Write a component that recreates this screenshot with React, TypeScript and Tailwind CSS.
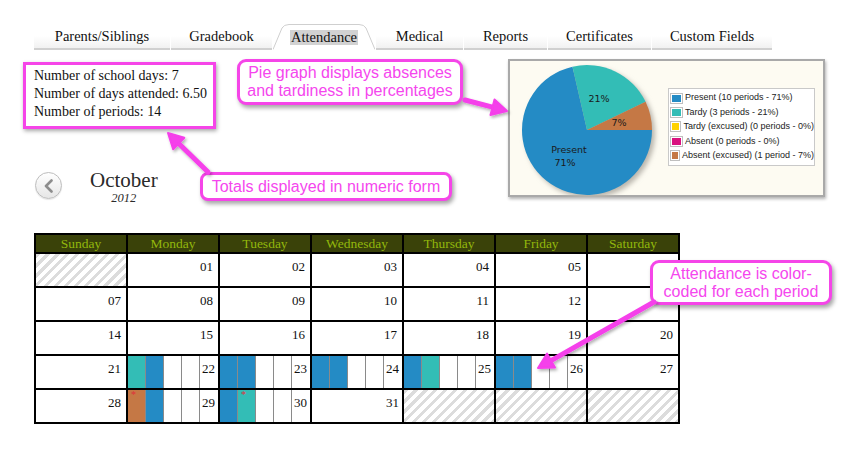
import React from "react";

const PINK = "#f53fea";

type Seg = "t" | "b" | "o" | "w";
type Cell =
  | { kind: "hatch" }
  | { kind: "num"; n: string }
  | { kind: "per"; n: string; p: Seg[]; star?: number }
  | { kind: "off"; n: string };

const rows: Cell[][] = [
  [{ kind: "hatch" }, { kind: "num", n: "01" }, { kind: "num", n: "02" }, { kind: "num", n: "03" }, { kind: "num", n: "04" }, { kind: "num", n: "05" }, { kind: "num", n: "06" }],
  [{ kind: "num", n: "07" }, { kind: "num", n: "08" }, { kind: "num", n: "09" }, { kind: "num", n: "10" }, { kind: "num", n: "11" }, { kind: "num", n: "12" }, { kind: "num", n: "13" }],
  [{ kind: "num", n: "14" }, { kind: "num", n: "15" }, { kind: "num", n: "16" }, { kind: "num", n: "17" }, { kind: "num", n: "18" }, { kind: "num", n: "19" }, { kind: "num", n: "20" }],
  [
    { kind: "num", n: "21" },
    { kind: "per", n: "22", p: ["t", "b", "w", "w"] },
    { kind: "per", n: "23", p: ["b", "b", "w", "w"] },
    { kind: "per", n: "24", p: ["b", "b", "w", "w"] },
    { kind: "per", n: "25", p: ["b", "t", "w", "w"] },
    { kind: "per", n: "26", p: ["b", "b", "w", "w"] },
    { kind: "num", n: "27" },
  ],
  [
    { kind: "num", n: "28" },
    { kind: "per", n: "29", p: ["o", "b", "w", "w"], star: 0 },
    { kind: "per", n: "30", p: ["b", "t", "w", "w"], star: 1 },
    { kind: "off", n: "31" },
    { kind: "hatch" },
    { kind: "hatch" },
    { kind: "hatch" },
  ],
];

const segClass: Record<Seg, string> = {
  t: "bg-[#33bdb6]",
  b: "bg-[#248bc5]",
  o: "bg-[#c57845]",
  w: "bg-white",
};

const days = ["Sunday", "Monday", "Tuesday", "Wednesday", "Thursday", "Friday", "Saturday"];

function CalCell({ c }: { c: Cell }) {
  if (c.kind === "hatch")
    return (
      <div className="h-[32px] bg-[image:repeating-linear-gradient(135deg,#dcdcdc_0px,#dcdcdc_3px,#ffffff_3px,#ffffff_7px)]" />
    );
  if (c.kind === "num")
    return (
      <div className="h-[32px] bg-white flex justify-end pr-[5px] pt-[6px] text-[13px] leading-none text-[#111]">
        {c.n}
      </div>
    );
  if (c.kind === "off")
    return (
      <div className="h-[32px] bg-white pl-[74px] pt-[6px] text-[13px] leading-none text-[#111]">{c.n}</div>
    );
  return (
    <div className="h-[32px] bg-white flex">
      {c.p.map((s, i) => (
        <div key={i} className={`relative w-[18px] h-full border-r border-[#8a8a8a] ${segClass[s]}`}>
          {c.star === i && (
            <span className="absolute left-[3px] top-[0px] text-[10px] leading-none text-[#e0303a]">*</span>
          )}
        </div>
      ))}
      <div className="pl-[2px] pt-[6px] text-[13px] leading-none text-[#111]">{c.n}</div>
    </div>
  );
}

function arrowPts(x1: number, y1: number, x2: number, y2: number, L: number, W: number) {
  const dx = x2 - x1;
  const dy = y2 - y1;
  const len = Math.sqrt(dx * dx + dy * dy);
  const ux = dx / len;
  const uy = dy / len;
  const bx = x2 - ux * L;
  const by = y2 - uy * L;
  const px = -uy;
  const py = ux;
  return {
    bx,
    by,
    pts: `${x2},${y2} ${bx + (px * W) / 2},${by + (py * W) / 2} ${bx - (px * W) / 2},${by - (py * W) / 2}`,
  };
}

function Arrow({ x1, y1, x2, y2 }: { x1: number; y1: number; x2: number; y2: number }) {
  const a = arrowPts(x1, y1, x2, y2, 15, 16);
  return (
    <g filter="url(#ash)">
      <line x1={x1} y1={y1} x2={a.bx} y2={a.by} stroke={PINK} strokeWidth={5} strokeLinecap="round" />
      <polygon points={a.pts} fill={PINK} stroke={PINK} strokeWidth={2} strokeLinejoin="round" />
    </g>
  );
}

function Pie() {
  const cx = 77;
  const cy = 69;
  const r = 65;
  const pt = (a: number) => [cx + r * Math.cos((a * Math.PI) / 180), cy - r * Math.sin((a * Math.PI) / 180)];
  const slice = (a0: number, a1: number) => {
    const p0 = pt(a0);
    const p1 = pt(a1);
    const large = a1 - a0 > 180 ? 1 : 0;
    return `M${cx},${cy} L${p0[0]},${p0[1]} A${r},${r} 0 ${large} 0 ${p1[0]},${p1[1]} Z`;
  };
  return (
    <svg width="158" height="136" className="block shrink-0">
      <defs>
        <filter id="psh" x="-20%" y="-20%" width="140%" height="140%">
          <feGaussianBlur stdDeviation="2.5" />
        </filter>
      </defs>
      <circle cx={cx + 3} cy={cy + 3} r={r} fill="#b9b6ad" filter="url(#psh)" />
      <path d={slice(102.9, 360)} fill="#248bc5" />
      <path d={slice(25.7, 102.9)} fill="#33bdb6" />
      <path d={slice(0, 25.7)} fill="#c57845" />
      <g fontFamily="'DejaVu Sans', sans-serif" fontSize="9.5" fill="#1a1a1a" textAnchor="middle">
        <text x="89" y="41">21%</text>
        <text x="109" y="65">7%</text>
        <text x="59" y="92">Present</text>
        <text x="55" y="105">71%</text>
      </g>
    </svg>
  );
}

const legend: [string, string][] = [
  ["#248bc5", "Present (10 periods - 71%)"],
  ["#33bdb6", "Tardy (3 periods - 21%)"],
  ["#ffd200", "Tardy (excused) (0 periods - 0%)"],
  ["#d9127f", "Absent (0 periods - 0%)"],
  ["#c57845", "Absent (excused) (1 period - 7%)"],
];

const tabs: { label: string; w: string; active?: boolean }[] = [
  { label: "Parents/Siblings", w: "w-[136px]" },
  { label: "Gradebook", w: "w-[101px]" },
  { label: "Attendance", w: "w-[102px]", active: true },
  { label: "Medical", w: "w-[87px]" },
  { label: "Reports", w: "w-[83px]" },
  { label: "Certificates", w: "w-[103px]" },
  { label: "Custom Fields", w: "w-[120px]" },
];

export default function App() {
  return (
    <div className="relative w-[860px] h-[453px] overflow-hidden bg-white font-['Liberation_Serif',serif] text-[#111]">
      {/* Tabs */}
      <div className="flex gap-[1px] pl-[34px] pt-[24px] h-[50px]">
        {tabs.map((t) =>
          t.active ? (
            <div key={t.label} className={`relative ${t.w} h-[26px] flex items-center justify-center pt-[1px]`}>
              <svg className="absolute inset-0" width="102" height="26">
                <path d="M0,25.5 L9,4 Q11,0.5 16,0.5 L86,0.5 Q91,0.5 93,4 L102,25.5" fill="#fff" stroke="#cfcfcf" strokeWidth="1" />
              </svg>
              <span className="relative bg-[#d2d2d2] px-[1px] text-[14.5px] leading-[15px]">{t.label}</span>
            </div>
          ) : (
            <div
              key={t.label}
              className={`${t.w} h-[26px] flex items-center justify-center pt-[1px] border-b-2 border-[#d0d0d0] bg-gradient-to-b from-white via-white to-[#f1f1f1] text-[14.5px]`}
            >
              {t.label}
            </div>
          )
        )}
      </div>

      {/* Top section */}
      <div className="flex">
        <div className="w-[480px] shrink-0">
          <div className="ml-[23px] mt-[12px] w-[193px] h-[67px] border-[3px] border-[#f545e8] bg-white shadow-[1px_2px_4px_rgba(0,0,0,0.35)] pl-[8px] pt-[2px] text-[14px] leading-[18px]">
            <div>Number of school days: 7</div>
            <div>Number of days attended: 6.50</div>
            <div>Number of periods: 14</div>
          </div>
          <div className="mt-[43px] h-[30px] flex items-start">
            <div className="ml-[35px] w-[27px] h-[27px] rounded-full border border-[#bdbdbd] bg-gradient-to-b from-white to-[#e6e6e6] flex items-center justify-center shadow-[0_1px_1px_rgba(0,0,0,0.1)]">
              <svg width="12" height="14" viewBox="0 0 12 14">
                <path d="M8.5,1.5 L3,7 L8.5,12.5" fill="none" stroke="#8d8d8d" strokeWidth="2.6" strokeLinecap="round" strokeLinejoin="round" />
              </svg>
            </div>
            <div className="ml-[28px] -mt-[4px] flex flex-col items-center">
              <div className="text-[21px] leading-[24px] text-[#2a2a2a]">October</div>
              <div className="text-[12.5px] italic leading-[12px] text-[#2a2a2a]">2012</div>
            </div>
          </div>
        </div>
        <div className="ml-[28px] mt-[9px] w-[317px] h-[138px] border-2 border-[#a9a9a9] bg-[#fdfbf2] shadow-[1px_2px_3px_rgba(0,0,0,0.3)] flex">
          <Pie />
          <div className="mt-[27px] w-[147px] h-[78px] border border-[#c9c9c9] bg-white flex flex-col justify-around py-[2px] font-['Liberation_Sans',sans-serif] text-[9px] text-[#222]">
            {legend.map(([c, l]) => (
              <div key={l} className="flex items-center gap-[2px] pl-[1px]">
                <span className="w-[13px] h-[11px] border border-[#bfbfbf] p-[1px] bg-white">
                  <span className="block w-full h-full" style={{ backgroundColor: c }} />
                </span>
                <span className="whitespace-nowrap">{l}</span>
              </div>
            ))}
          </div>
        </div>
      </div>

      {/* Calendar */}
      <div className="ml-[34px] mt-[31px] w-[646px] bg-black p-[2px] grid grid-cols-7 gap-[2px]">
        {days.map((d) => (
          <div key={d} className="h-[17px] bg-[#3a4209] text-[#92b70c] text-[13.5px] leading-[17px] text-center">
            {d}
          </div>
        ))}
        {rows.flat().map((c, i) => (
          <CalCell key={i} c={c} />
        ))}
      </div>

      {/* Annotation callouts */}
      <div className="absolute left-[237px] top-[59px] w-[226px] h-[46px] rounded-[9px] border-[3px] border-[#f545e8] bg-white shadow-[2px_3px_4px_rgba(0,0,0,0.35)] flex flex-col items-center justify-center font-['Liberation_Sans',sans-serif] text-[16px] leading-[18px] text-[#f546ee]">
        <div>Pie graph displays absences</div>
        <div>and tardiness in percentages</div>
      </div>
      <div className="absolute left-[200px] top-[172px] w-[252px] h-[29px] rounded-[8px] border-[3px] border-[#f545e8] bg-white shadow-[2px_3px_4px_rgba(0,0,0,0.35)] flex items-center justify-center font-['Liberation_Sans',sans-serif] text-[16px] leading-[18px] text-[#f546ee]">
        Totals displayed in numeric form
      </div>
      <div className="absolute left-[650px] top-[260px] w-[182px] h-[45px] rounded-[9px] border-[3px] border-[#f545e8] bg-white shadow-[2px_3px_4px_rgba(0,0,0,0.35)] flex flex-col items-center justify-center font-['Liberation_Sans',sans-serif] text-[16px] leading-[18px] text-[#f546ee]">
        <div>Attendance is color-</div>
        <div>coded for each period</div>
      </div>

      {/* Arrows */}
      <svg className="absolute inset-0 pointer-events-none" width="860" height="453">
        <defs>
          <filter id="ash" x="-30%" y="-30%" width="160%" height="160%">
            <feDropShadow dx="1.5" dy="2" stdDeviation="1.5" floodColor="#000" floodOpacity="0.3" />
          </filter>
        </defs>
        <Arrow x1={465} y1={100} x2={507} y2={111} />
        <Arrow x1={208} y1={172} x2={168} y2={133} />
        <Arrow x1={654} y1={302} x2={538} y2={368} />
      </svg>
    </div>
  );
}
